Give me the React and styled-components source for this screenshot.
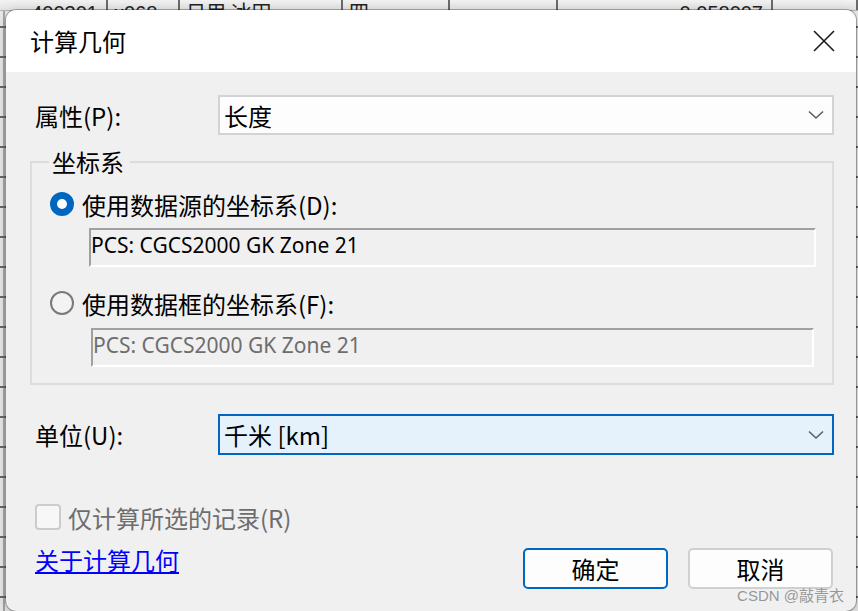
import React from 'react'
import styled, { createGlobalStyle } from 'styled-components'

const GlobalStyle = createGlobalStyle`
    html, body {
        margin: 0;
        padding: 0;
        overflow: hidden;
        background: #e9e9e9;
    }
`

const cjk = `"Noto Sans CJK SC", "Noto Sans", sans-serif`
const latin = `"Noto Sans", "Noto Sans CJK SC", sans-serif`

const headCells = [
    { w: 108, text: '400301', right: true },
    { w: 72, text: 'x068' },
    { w: 163, text: '日用 冰田' },
    { w: 107, text: '四' },
    { w: 108, text: '' },
    { w: 215, text: '0.058007', right: true },
    { w: 85, text: '' },
]

function Chevron() {
    return (
        <svg width="16" height="10" viewBox="0 0 16 10">
            <path d="M1 1.5 L8 8 L15 1.5" fill="none" stroke="#5f5f5f" strokeWidth="1.6" />
        </svg>
    )
}

function CloseIcon() {
    return (
        <svg width="22" height="22" viewBox="0 0 22 22">
            <path d="M1 1 L21 21 M21 1 L1 21" stroke="#1b1b1b" strokeWidth="1.6" />
        </svg>
    )
}

export default function App() {
    return (
        <React.Fragment>
            <GlobalStyle />
            <SCREEN>
                <TABLEHEAD>
                    {headCells.map((c, i) => (
                        <HEADCELL key={i} $w={c.w} $right={c.right}>{c.text}</HEADCELL>
                    ))}
                </TABLEHEAD>
                <DIALOG>
                    <TITLEBAR>
                        <TITLE>计算几何</TITLE>
                        <CLOSE><CloseIcon /></CLOSE>
                    </TITLEBAR>
                    <BODY>
                        <FIELDROW>
                            <LABEL>属性(P):</LABEL>
                            <COMBO>
                                <span>长度</span>
                                <Chevron />
                            </COMBO>
                        </FIELDROW>

                        <GROUP>
                            <LEGEND>坐标系</LEGEND>
                            <RADIOROW>
                                <RADIO $checked />
                                <OPTION>使用数据源的坐标系(D):</OPTION>
                            </RADIOROW>
                            <TEXTBOX $top={11}>PCS: CGCS2000 GK Zone 21</TEXTBOX>
                            <RADIOROW $top={23}>
                                <RADIO />
                                <OPTION>使用数据框的坐标系(F):</OPTION>
                            </RADIOROW>
                            <TEXTBOX $top={12} $inset $disabled>PCS: CGCS2000 GK Zone 21</TEXTBOX>
                        </GROUP>

                        <FIELDROW $top={29}>
                            <LABEL>单位(U):</LABEL>
                            <COMBO $focused>
                                <span>千米 [km]</span>
                                <Chevron />
                            </COMBO>
                        </FIELDROW>

                        <CHECKROW>
                            <CHECKBOX />
                            <CHECKLABEL>仅计算所选的记录(R)</CHECKLABEL>
                        </CHECKROW>

                        <FOOTER>
                            <LINK>关于计算几何</LINK>
                            <BUTTONS>
                                <BUTTON $primary>确定</BUTTON>
                                <BUTTON>取消</BUTTON>
                            </BUTTONS>
                        </FOOTER>
                    </BODY>
                    <WATERMARK>CSDN @敲青衣</WATERMARK>
                </DIALOG>
            </SCREEN>
        </React.Fragment>
    )
}

const SCREEN = styled.div`
    position: relative;
    width: 858px;
    height: 611px;
    overflow: hidden;
    background-color: #ececec;
    background-image:
        repeating-linear-gradient(to bottom, transparent 0, transparent 26px, #6a6a6a 26px, #6a6a6a 28px, transparent 28px, transparent 30px),
        linear-gradient(to right, transparent 3px, #a9a9a9 3px, #a9a9a9 5px, transparent 5px);
`

const TABLEHEAD = styled.div`
    display: flex;
    height: 10px;
    overflow: hidden;
    background: linear-gradient(#f2f2f2, #e4e4e4);
    border-bottom: 1px solid #b4b4b4;
`

const HEADCELL = styled.div`
    flex: 0 0 ${p => p.$w}px;
    box-sizing: border-box;
    border-right: 2px solid #6b6b6b;
    padding: 3px 8px 0 6px;
    font-family: "Liberation Sans", "Noto Sans CJK SC", sans-serif;
    font-size: 20px;
    line-height: 20px;
    color: #222;
    text-align: ${p => (p.$right ? 'right' : 'left')};
    white-space: nowrap;
`

const DIALOG = styled.div`
    position: absolute;
    left: 6px;
    top: 10px;
    width: 850px;
    height: 601px;
    border-radius: 10px;
    overflow: hidden;
    background: #f0f0f0;
    box-shadow: 0 0 0 1px rgba(0, 0, 0, 0.28), 0 4px 14px rgba(0, 0, 0, 0.25);
`

const TITLEBAR = styled.div`
    display: flex;
    align-items: center;
    justify-content: space-between;
    height: 62px;
    padding: 0 21px 0 24px;
    background: #ffffff;
`

const TITLE = styled.div`
    font-family: ${cjk};
    font-size: 24px;
    color: #000;
    padding-bottom: 2px;
`

const CLOSE = styled.div`
    display: flex;
    width: 22px;
    height: 22px;
`

const BODY = styled.div`
    display: flex;
    flex-direction: column;
    padding: 23px 22px 0 24px;
`

const FIELDROW = styled.div`
    display: flex;
    align-items: center;
    margin-top: ${p => p.$top || 0}px;
`

const LABEL = styled.div`
    flex: 0 0 188px;
    box-sizing: border-box;
    padding-left: 5px;
    font-family: ${cjk};
    font-size: 24px;
    color: #000;
`

const COMBO = styled.div`
    flex: 1;
    display: flex;
    align-items: center;
    justify-content: space-between;
    box-sizing: border-box;
    height: ${p => (p.$focused ? 41 : 40)}px;
    padding: 0 8px 0 4px;
    border: 2px solid ${p => (p.$focused ? '#0067c0' : '#d3d3d3')};
    background: ${p => (p.$focused ? '#e5f1fb' : '#fdfdfd')};
    font-family: ${cjk};
    font-size: 24px;
    color: #000;
`

const GROUP = styled.fieldset`
    margin: 15px 0 0 0;
    padding: 0 16px 16px 17px;
    border: 2px solid #dcdcdc;
    display: flex;
    flex-direction: column;
`

const LEGEND = styled.legend`
    padding: 0 6px 0 3px;
    font-family: ${cjk};
    font-size: 24px;
    line-height: 24px;
    color: #000;
`

const RADIOROW = styled.div`
    display: flex;
    align-items: center;
    gap: 8px;
    height: 26px;
    margin-top: ${p => (p.$top === undefined ? 17 : p.$top)}px;
`

const RADIO = styled.span`
    flex: 0 0 auto;
    box-sizing: border-box;
    width: 24px;
    height: 24px;
    border-radius: 50%;
    border: ${p => (p.$checked ? '7px solid #0067c0' : '2px solid #7a7a7a')};
    background: ${p => (p.$checked ? '#ffffff' : '#f3f3f3')};
    margin-left: 1px;
`

const OPTION = styled.span`
    font-family: ${cjk};
    font-size: 24px;
    color: #000;
`

const TEXTBOX = styled.div`
    box-sizing: border-box;
    height: 39px;
    margin: ${p => p.$top}px ${p => (p.$inset ? 2 : 0)}px 0 ${p => (p.$inset ? 42 : 40)}px;
    padding: 1px 0 0 0;
    border-top: 2px solid #a0a0a0;
    border-left: 2px solid #a0a0a0;
    border-right: 2px solid #ffffff;
    border-bottom: 2px solid #ffffff;
    background: #f0f0f0;
    font-family: ${latin};
    font-size: 21px;
    line-height: 28px;
    color: ${p => (p.$disabled ? '#6d6d6d' : '#000')};
    white-space: nowrap;
`

const CHECKROW = styled.div`
    display: flex;
    align-items: center;
    gap: 7px;
    margin-top: 49px;
    padding-left: 5px;
    height: 26px;
`

const CHECKBOX = styled.span`
    box-sizing: border-box;
    width: 26px;
    height: 26px;
    border: 2px solid #cccccc;
    border-radius: 4px;
    background: #f7f7f7;
`

const CHECKLABEL = styled.span`
    font-family: ${cjk};
    font-size: 24px;
    color: #6d6d6d;
`

const FOOTER = styled.div`
    display: flex;
    justify-content: space-between;
    align-items: flex-start;
    margin-top: 17px;
    padding-left: 5px;
`

const LINK = styled.a`
    font-family: ${cjk};
    font-size: 24px;
    line-height: 26px;
    color: #0000ff;
    text-decoration: underline;
    text-underline-offset: 2px;
    cursor: pointer;
`

const BUTTONS = styled.div`
    display: flex;
    gap: 20px;
    margin-top: 1px;
    margin-right: 1px;
`

const BUTTON = styled.button`
    box-sizing: border-box;
    width: 145px;
    height: 41px;
    border-radius: 5px;
    border: 2px solid ${p => (p.$primary ? '#0067c0' : '#d0d0d0')};
    background: #fdfdfd;
    font-family: ${cjk};
    font-size: 24px;
    color: #000;
    padding: 0;
`

const WATERMARK = styled.div`
    position: absolute;
    right: 12px;
    bottom: 6px;
    font-family: "Liberation Sans", "Noto Sans CJK SC", sans-serif;
    font-size: 15px;
    color: rgba(120, 120, 120, 0.75);
`
